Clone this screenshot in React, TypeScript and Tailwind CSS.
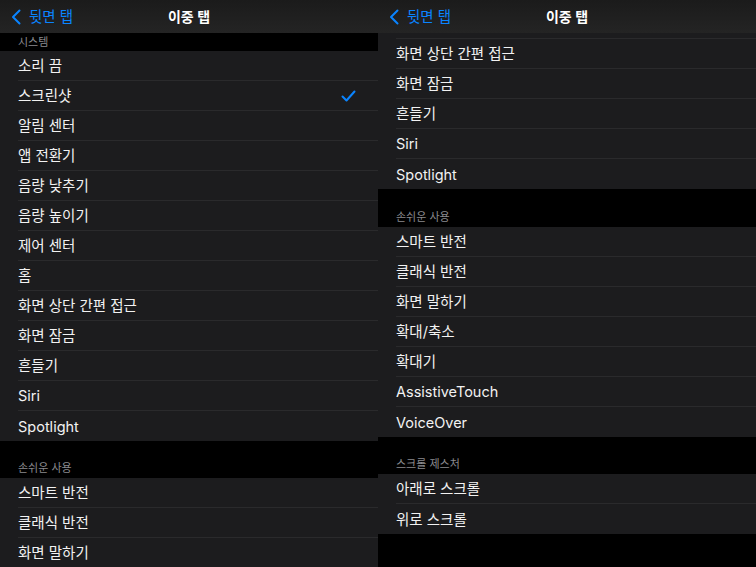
import type { ReactNode } from 'react'

const font = { fontFamily: 'Inter, "Noto Sans CJK KR", sans-serif' }

function NavBar() {
  return (
    <div className="relative flex h-[33px] shrink-0 items-center bg-gradient-to-b from-[#1b1b1b] to-[#242424]">
      <div className="flex items-center pl-[11px] text-[14.5px] text-[#0a84ff]">
        <svg width="10" height="16" viewBox="0 0 10 16" fill="none" className="mr-[8px]">
          <path d="M8.5 1.5 2 8l6.5 6.5" stroke="#0a84ff" strokeWidth="2" strokeLinecap="round" strokeLinejoin="round" />
        </svg>
        <span>뒷면 탭</span>
      </div>
      <div className="absolute left-1/2 -translate-x-1/2 text-[14px] font-semibold text-white">이중 탭</div>
    </div>
  )
}

function Row({ label, last, checked }: { label: string; last?: boolean; checked?: boolean }) {
  return (
    <div className="h-[30px] shrink-0 bg-[#1c1c1e] pl-[18px]">
      <div
        className={
          'flex h-full items-center justify-between pt-[1px] pr-[22px] text-[14.5px] text-[#f2f2f2] ' +
          (last ? '' : 'border-b border-[#2a2a2c]')
        }
      >
        <span>{label}</span>
        {checked && (
          <svg width="15" height="12" viewBox="0 0 15 12" fill="none">
            <path d="M1.5 6.5 5.5 10.5 13.5 1.5" stroke="#0a84ff" strokeWidth="2" strokeLinecap="round" strokeLinejoin="round" />
          </svg>
        )}
      </div>
    </div>
  )
}

function Group({ items, checked }: { items: string[]; checked?: string }) {
  return (
    <>
      {items.map((t, i) => (
        <Row key={t} label={t} last={i === items.length - 1} checked={t === checked} />
      ))}
    </>
  )
}

function SectionHeader({ children, h }: { children: ReactNode; h: string }) {
  return (
    <div className={'flex shrink-0 items-end bg-black pb-[3px] pl-[18px] text-[11px] leading-[13px] text-[#8a8a8e] ' + h}>
      {children}
    </div>
  )
}

const system = [
  '소리 끔',
  '스크린샷',
  '알림 센터',
  '앱 전환기',
  '음량 낮추기',
  '음량 높이기',
  '제어 센터',
  '홈',
  '화면 상단 간편 접근',
  '화면 잠금',
  '흔들기',
  'Siri',
  'Spotlight',
]

const access = ['스마트 반전', '클래식 반전', '화면 말하기', '확대/축소', '확대기', 'AssistiveTouch', 'VoiceOver']

export default function App() {
  return (
    <div className="flex h-[567px] w-[756px] overflow-hidden bg-black" style={font}>
      {/* left pane */}
      <div className="flex h-full w-[378px] flex-col overflow-hidden">
        <NavBar />
        <div className="flex h-[18px] shrink-0 items-end bg-black pb-[2px] pl-[18px] text-[11px] leading-[13px] text-[#8a8a8e]">
          시스템
        </div>
        <Group items={system} checked="스크린샷" />
        <SectionHeader h="h-[37px]">손쉬운 사용</SectionHeader>
        <Group items={access.slice(0, 4)} />
      </div>

      {/* right pane */}
      <div className="flex h-full w-[378px] flex-col overflow-hidden">
        <NavBar />
        <div className="h-[6px] shrink-0 bg-[#1c1c1e] pl-[18px]">
          <div className="h-full border-b border-[#2a2a2c]" />
        </div>
        <Group items={system.slice(8)} />
        <SectionHeader h="h-[38px]">손쉬운 사용</SectionHeader>
        <Group items={access} />
        <SectionHeader h="h-[37px]">스크롤 제스처</SectionHeader>
        <Group items={['아래로 스크롤', '위로 스크롤']} />
      </div>
    </div>
  )
}
